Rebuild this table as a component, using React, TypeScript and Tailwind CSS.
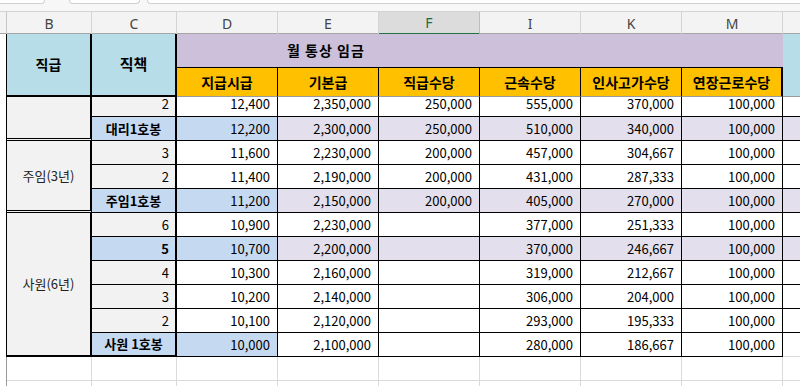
import React from 'react';

type Kind = 'plain' | 'base' | 'mid' | 'last';

interface Row {
    c: string;
    vals: string[];
    kind: Kind;
}

const rows: Row[] = [
    { c: '2', vals: ['12,400', '2,350,000', '250,000', '555,000', '370,000', '100,000'], kind: 'plain' },
    { c: '대리1호봉', vals: ['12,200', '2,300,000', '250,000', '510,000', '340,000', '100,000'], kind: 'base' },
    { c: '3', vals: ['11,600', '2,230,000', '200,000', '457,000', '304,667', '100,000'], kind: 'plain' },
    { c: '2', vals: ['11,400', '2,190,000', '200,000', '431,000', '287,333', '100,000'], kind: 'plain' },
    { c: '주임1호봉', vals: ['11,200', '2,150,000', '200,000', '405,000', '270,000', '100,000'], kind: 'base' },
    { c: '6', vals: ['10,900', '2,230,000', '', '377,000', '251,333', '100,000'], kind: 'plain' },
    { c: '5', vals: ['10,700', '2,200,000', '', '370,000', '246,667', '100,000'], kind: 'mid' },
    { c: '4', vals: ['10,300', '2,160,000', '', '319,000', '212,667', '100,000'], kind: 'plain' },
    { c: '3', vals: ['10,200', '2,140,000', '', '306,000', '204,000', '100,000'], kind: 'plain' },
    { c: '2', vals: ['10,100', '2,120,000', '', '293,000', '195,333', '100,000'], kind: 'plain' },
    { c: '사원 1호봉', vals: ['10,000', '2,100,000', '', '280,000', '186,667', '100,000'], kind: 'last' },
];

// 직급 groups: start row index -> label and span
const groups: Record<number, { label: string; span: string; last: boolean }> = {
    0: { label: '', span: 'row-span-2', last: false },
    2: { label: '주임(3년)', span: 'row-span-3', last: false },
    5: { label: '사원(6년)', span: 'row-span-6', last: true },
};

const letters = ['B', 'C', 'D', 'E', 'F', 'I', 'K', 'M'];
const subHeads = ['지급시급', '기본급', '직급수당', '근속수당', '인사고가수당', '연장근로수당'];

const gridCols = 'grid grid-cols-[7px_85px_85px_101px_101px_101px_101px_101px_101px_17px]';

export default function App() {
    return (
        <div className="w-[800px] h-[386px] overflow-hidden bg-white font-['Noto_Sans_CJK_KR','Noto_Sans',sans-serif] text-[13px] text-black">
            {/* tab strip */}
            <div className="h-[11px] flex items-start bg-[#f7f7f7]">
                <div className="w-[45px] h-[4px] bg-white border-r border-b border-[#d0d0d0] rounded-br-[4px]" />
                <div className="ml-[24px] w-[71px] h-[4px] bg-white border-x border-b border-[#d0d0d0] rounded-b-[4px]" />
                <div className="ml-[7px] flex-1 h-[4px] bg-white border-l border-b border-[#d0d0d0] rounded-bl-[4px]" />
            </div>

            {/* column letters */}
            <div className={`${gridCols} h-[23px] border-t border-b border-[#d4d4d4] border-b-[#a6a6a6] bg-[#f3f3f3] font-['Noto_Sans',sans-serif] text-[14px] text-[#444]`}>
                <div className="border-r border-[#c6c6c6]" />
                {letters.map((l) =>
                    l === 'F' ? (
                        <div key={l} className="flex items-center justify-center bg-[#dcdcdc] border-r border-[#bdbdbd] border-b-2 border-b-[#217346] text-[#1d6b44]">{l}</div>
                    ) : (
                        <div key={l} className="flex items-center justify-center border-r border-[#d4d4d4]">{l}</div>
                    )
                )}
                <div />
            </div>

            {/* sheet */}
            <div className={`${gridCols} grid-rows-[34px_29px_20px_24px_24px_24px_24px_24px_24px_24px_24px_24px_24px_24px_24px]`}>
                {/* header row 1 */}
                <div className="row-span-2 border-r border-black" />
                <div className="row-span-2 bg-[#b7dde8] border-r-2 border-b-2 border-black flex items-center justify-center text-[14px] font-semibold">직급</div>
                <div className="row-span-2 bg-[#b7dde8] border-r-2 border-b-2 border-black flex items-center justify-center text-[15px] font-bold">직책</div>
                <div className="col-span-6 bg-[#ccc0da] border-b border-black flex items-center pl-[110px] text-[14px] font-bold tracking-[1px]">월 통상 임금</div>
                <div className="row-span-2 bg-[#b7dde8] border-b border-[#9a9a9a]" />

                {/* header row 2 */}
                {subHeads.map((h, i) => (
                    <div
                        key={h}
                        className={`bg-[#ffc000] border-b border-b-[#9a9a9a] flex items-center justify-center text-[14px] font-bold whitespace-nowrap ${i === 5 ? 'border-r-2 border-r-black' : 'border-r border-r-black'}`}
                    >
                        {h}
                    </div>
                ))}

                {/* data rows */}
                {rows.map((row, r) => {
                    const g = groups[r];
                    const isLast = r === rows.length - 1;
                    const pad = r === 0 ? 'pb-[5px]' : '';
                    const blueC = row.kind !== 'plain';
                    const lavender = row.kind === 'base' || row.kind === 'mid';
                    return (
                        <React.Fragment key={r}>
                            <div className="border-r border-black" />
                            {g && (
                                <div
                                    className={`${g.span} bg-[#f2f2f2] border-r-2 border-black flex items-center justify-center text-[#222] ${
                                        g.last ? 'border-b-2' : 'border-b-[3px] [border-bottom-style:double]'
                                    }`}
                                >
                                    {g.label}
                                </div>
                            )}
                            <div
                                className={`flex items-center border-r-2 border-black ${isLast ? 'border-b-2' : 'border-b'} ${pad} ${
                                    blueC ? 'bg-[#c5d9f1] font-bold' : 'bg-[#f2f2f2]'
                                } ${row.kind === 'base' || row.kind === 'last' ? 'justify-center' : 'justify-end pr-[6px]'}`}
                            >
                                {row.c}
                            </div>
                            {row.vals.map((v, i) => (
                                <div
                                    key={i}
                                    className={`flex items-center justify-end pr-[7px] border-r border-b border-black ${pad} ${
                                        i === 0 && blueC ? 'bg-[#c5d9f1]' : lavender ? 'bg-[#e4dfec]' : 'bg-white'
                                    }`}
                                >
                                    {v}
                                </div>
                            ))}
                            <div className={`border-b ${isLast ? 'border-[#dadada]' : 'border-black'} ${lavender ? 'bg-[#e4dfec]' : 'bg-white'}`} />
                        </React.Fragment>
                    );
                })}

                {/* empty rows */}
                {[0, 1].map((e) => (
                    <React.Fragment key={`e${e}`}>
                        <div className="border-r border-[#9a9a9a]" />
                        {letters.map((l) => (
                            <div key={l} className="border-r border-b border-[#dadada]" />
                        ))}
                        <div className="border-b border-[#dadada]" />
                    </React.Fragment>
                ))}
            </div>
        </div>
    );
}
